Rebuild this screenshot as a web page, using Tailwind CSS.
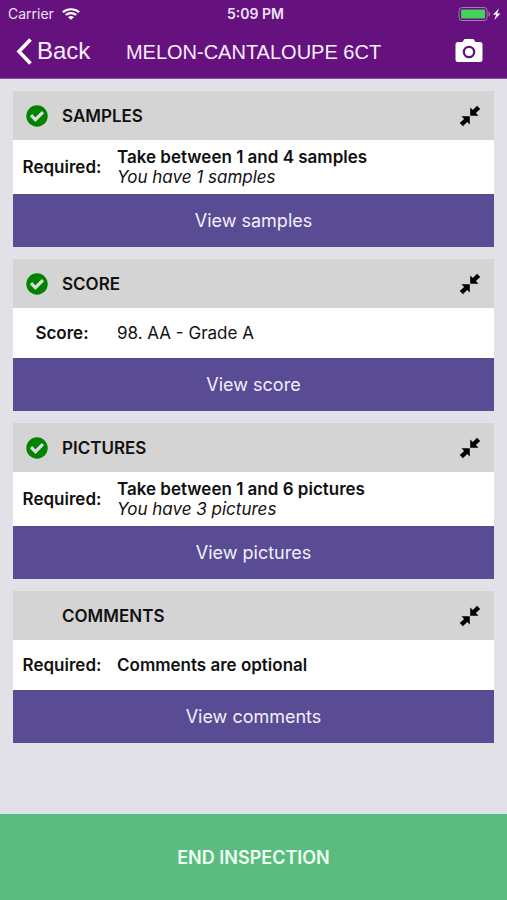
<!DOCTYPE html>
<html lang="en">
<head>
<meta charset="utf-8">
<meta name="viewport" content="width=device-width, initial-scale=1">
<title>Inspection</title>
<script src="https://cdn.jsdelivr.net/npm/@tailwindcss/browser@4"></script>
</head>
<body class="flex min-h-screen flex-col bg-[#e2e1e8] font-['Inter',sans-serif] text-[17px] leading-5 text-[#111111]">
<svg class="hidden" aria-hidden="true">
  <symbol id="check" viewBox="0 0 22 22"><circle cx="11" cy="11" r="10.7" fill="#008400"/><path d="M5 10.200l4.400 4.500 7.600-7.600" fill="none" stroke="#dcdcdc" stroke-width="3.200"/></symbol>
  <symbol id="collapse" viewBox="0 0 22 22"><path d="M10.800 11.200v8.300l-2.600-2.500-4.300 4.200-3.100-3.100 4.300-4.200-2.600-2.700zM11.200 10.800v-8.300l2.600 2.500 4.300-4.200 3.100 3.100-4.300 4.200 2.600 2.700z" fill="#000"/></symbol>
</svg>
<header class="border-b border-[#8a4aa0] bg-[#65127f] font-['Liberation_Sans',Arial,sans-serif] text-[#fbeeff]">
  <div class="grid h-7 grid-cols-3 items-center pr-1 pl-2 font-['Inter',sans-serif] text-[14px] text-[#f0e2f5]">
    <div class="flex items-center gap-2"><span>Carrier</span>
      <svg class="h-3 w-[18px]" viewBox="0 0 16 12" preserveAspectRatio="none" fill="none" stroke="#fff" stroke-width="2.1" aria-hidden="true"><path d="M.8 4.2a10.3 10.3 0 0 1 14.4 0M3.4 7a6.6 6.6 0 0 1 9.2 0"/><path d="M8 11.8L5.3 9.2a3.9 3.9 0 0 1 5.4 0z" fill="#fff" stroke="none"/></svg>
    </div>
    <span class="text-center font-semibold">5:09 PM</span>
    <svg class="h-4 w-[45px] justify-self-end" viewBox="0 0 44 16" aria-hidden="true"><rect x=".6" y="1.5" width="28" height="13" rx="3" fill="none" stroke="#a77ab5"/><rect x="2.6" y="3.5" width="24" height="9" rx="1.2" fill="#45d15c"/><path d="M30 5.500c2 .5 2 4.500 0 5z" fill="#a77ab5"/><path d="M40.500 2.500l-6 6.200h3.200l-2 5.300 6.300-6.500h-3.300z" fill="#fff"/></svg>
  </div>
  <div class="grid h-[50px] grid-cols-[1fr_auto_1fr] items-center px-4 pb-1">
    <button class="flex items-center gap-1 justify-self-start text-[24px] leading-8" type="button">
      <svg class="h-7 w-[17px]" viewBox="0 0 17 28" fill="none" stroke="#fff" stroke-width="3.600" aria-hidden="true"><path d="M14.500 2.500L3 14.500 14.500 26.500"/></svg>Back</button>
    <h1 class="pt-0.5 text-[20px]">MELON-CANTALOUPE 6CT</h1>
    <button class="mr-2 justify-self-end" type="button" aria-label="Camera"><svg class="h-6 w-7" viewBox="0 0 28 24" aria-hidden="true"><path fill="#fff" fill-rule="evenodd" d="M9.500 0h9l2 3H25a2.500 2.500 0 0 1 2.500 2.500v15A2.500 2.500 0 0 1 25 23H3A2.500 2.500 0 0 1 .5 20.500v-15A2.500 2.500 0 0 1 3 3h4.500zM14 6.700a6.300 6.300 0 1 0 0 12.600A6.300 6.300 0 0 0 14 6.700zm0 2.300a4 4 0 1 1 0 8 4 4 0 0 1 0-8z"/></svg></button>
  </div>
</header>
<main class="flex flex-1 flex-col gap-3 px-[13px] py-3">
  <section>
    <div class="flex h-[49px] items-center bg-[#d4d4d4] px-[13px]"><svg class="mr-3.5 h-[22px] w-[22px]" aria-hidden="true"><use href="#check"/></svg><h2 class="flex-1 font-semibold">SAMPLES</h2><button type="button" aria-label="Collapse samples"><svg class="h-[22px] w-[22px]" aria-hidden="true"><use href="#collapse"/></svg></button></div>
    <div class="flex min-h-[54px] items-center bg-white"><strong class="w-[104px] pr-1.5 text-center font-semibold">Required:</strong><p><strong class="font-semibold">Take between 1 and 4 samples</strong><br><em>You have 1 samples</em></p></div>
    <button class="h-[53px] w-full bg-[#594c95] text-[18px] text-[#f3f0fa]" type="button">View samples</button>
  </section>
  <section>
    <div class="flex h-[49px] items-center bg-[#d4d4d4] px-[13px]"><svg class="mr-3.5 h-[22px] w-[22px]" aria-hidden="true"><use href="#check"/></svg><h2 class="flex-1 font-semibold">SCORE</h2><button type="button" aria-label="Collapse score"><svg class="h-[22px] w-[22px]" aria-hidden="true"><use href="#collapse"/></svg></button></div>
    <div class="flex min-h-[50px] items-center bg-white"><strong class="w-[104px] pr-1.5 text-center font-semibold">Score:</strong><p>98. AA - Grade A</p></div>
    <button class="h-[53px] w-full bg-[#594c95] text-[18px] text-[#f3f0fa]" type="button">View score</button>
  </section>
  <section>
    <div class="flex h-[49px] items-center bg-[#d4d4d4] px-[13px]"><svg class="mr-3.5 h-[22px] w-[22px]" aria-hidden="true"><use href="#check"/></svg><h2 class="flex-1 font-semibold">PICTURES</h2><button type="button" aria-label="Collapse pictures"><svg class="h-[22px] w-[22px]" aria-hidden="true"><use href="#collapse"/></svg></button></div>
    <div class="flex min-h-[54px] items-center bg-white"><strong class="w-[104px] pr-1.5 text-center font-semibold">Required:</strong><p><strong class="font-semibold">Take between 1 and 6 pictures</strong><br><em>You have 3 pictures</em></p></div>
    <button class="h-[53px] w-full bg-[#594c95] text-[18px] text-[#f3f0fa]" type="button">View pictures</button>
  </section>
  <section>
    <div class="flex h-[49px] items-center bg-[#d4d4d4] px-[13px]"><h2 class="flex-1 pl-9 font-semibold">COMMENTS</h2><button type="button" aria-label="Collapse comments"><svg class="h-[22px] w-[22px]" aria-hidden="true"><use href="#collapse"/></svg></button></div>
    <div class="flex min-h-[50px] items-center bg-white"><strong class="w-[104px] pr-1.5 text-center font-semibold">Required:</strong><p class="font-semibold">Comments are optional</p></div>
    <button class="h-[53px] w-full bg-[#594c95] text-[18px] text-[#f3f0fa]" type="button">View comments</button>
  </section>
</main>
<footer><button class="h-[86px] w-full bg-[#5abc80] pt-0.5 text-[18px] font-semibold text-[#effff2]" type="button">END INSPECTION</button></footer>
</body>
</html>
